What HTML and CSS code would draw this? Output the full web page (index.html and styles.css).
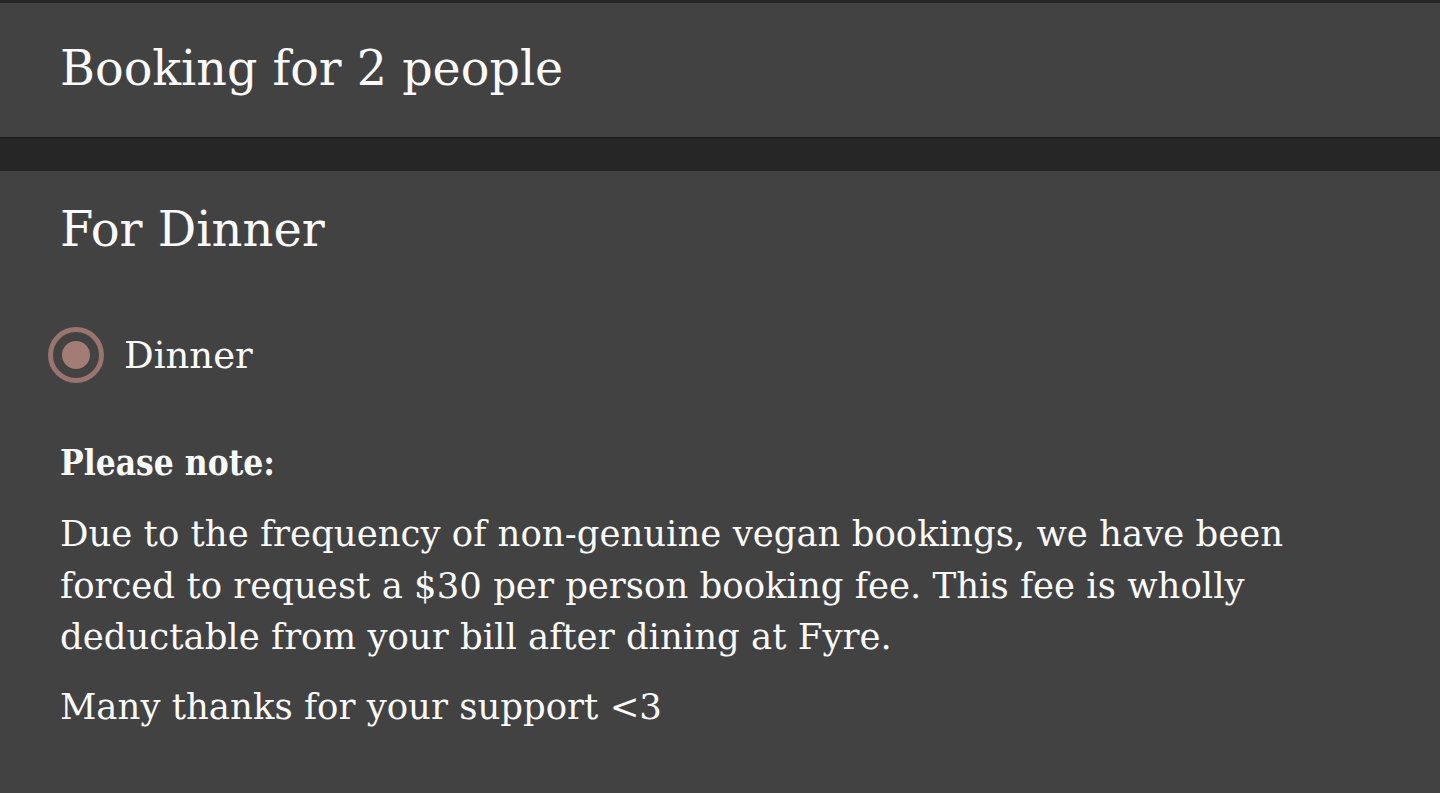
FILE: index.html
```html
<!DOCTYPE html>
<html>
<head>
<meta charset="utf-8">
<link rel="stylesheet" href="styles.css">
</head>
<body>
<div class="page">
  <div class="card card-top">
    <h1 class="title">Booking for 2 people</h1>
  </div>
  <div class="card card-main">
    <h2 class="title">For Dinner</h2>
    <label class="radio-row">
      <span class="radio"><span class="radio-dot"></span></span>
      <span class="radio-label">Dinner</span>
    </label>
    <p class="note-head">Please note:</p>
    <p class="note">Due to the frequency of non-genuine vegan bookings, we have been forced to request a $30 per person booking fee. This fee is wholly deductable from your bill after dining at Fyre.</p>
    <p class="note">Many thanks for your support &lt;3</p>
  </div>
</div>
</body>
</html>
```
FILE: styles.css
```css
html, body {
  margin: 0;
  padding: 0;
  background: #262626;
  height: 100%;
  overflow: hidden;
}
.page {
  font-family: "DejaVu Serif", "Liberation Serif", serif;
  color: #fafafa;
  padding-top: 3px;
  display: flex;
  flex-direction: column;
  gap: 34px;
  height: 100%;
  box-sizing: border-box;
}
.card {
  background: #424242;
  box-shadow: 0 1px 2px rgba(0,0,0,0.35);
  padding: 0 60px;
}
.card-top {
  height: 134px;
  display: flex;
  align-items: center;
}
.card-main {
  flex: 1;
  padding-top: 28px;
}
.title {
  margin: 0;
  font-weight: normal;
  font-size: 48px;
  line-height: 60px;
}
.card-top .title {
  margin-top: -2px;
  font-size: 47.6px;
}
.radio-row {
  display: flex;
  align-items: center;
  margin-left: -12px;
  margin-top: 68px;
  gap: 20px;
}
.radio {
  width: 56px;
  height: 56px;
  border: 5px solid #9a746e;
  border-radius: 50%;
  display: flex;
  align-items: center;
  justify-content: center;
  box-sizing: border-box;
}
.radio-dot {
  width: 28px;
  height: 28px;
  border-radius: 50%;
  background: #a37c75;
}
.radio-label {
  font-size: 37px;
}
.note-head {
  margin: 54px 0 0;
  font-family: "DejaVu Serif Condensed", "DejaVu Serif", serif;
  font-weight: bold;
  font-size: 35px;
  line-height: 52px;
}
.note {
  margin: 19px 0 0;
  font-size: 35.5px;
  line-height: 51.5px;
  max-width: 1300px;
}
.note + .note { margin-top: 18px; }
```
